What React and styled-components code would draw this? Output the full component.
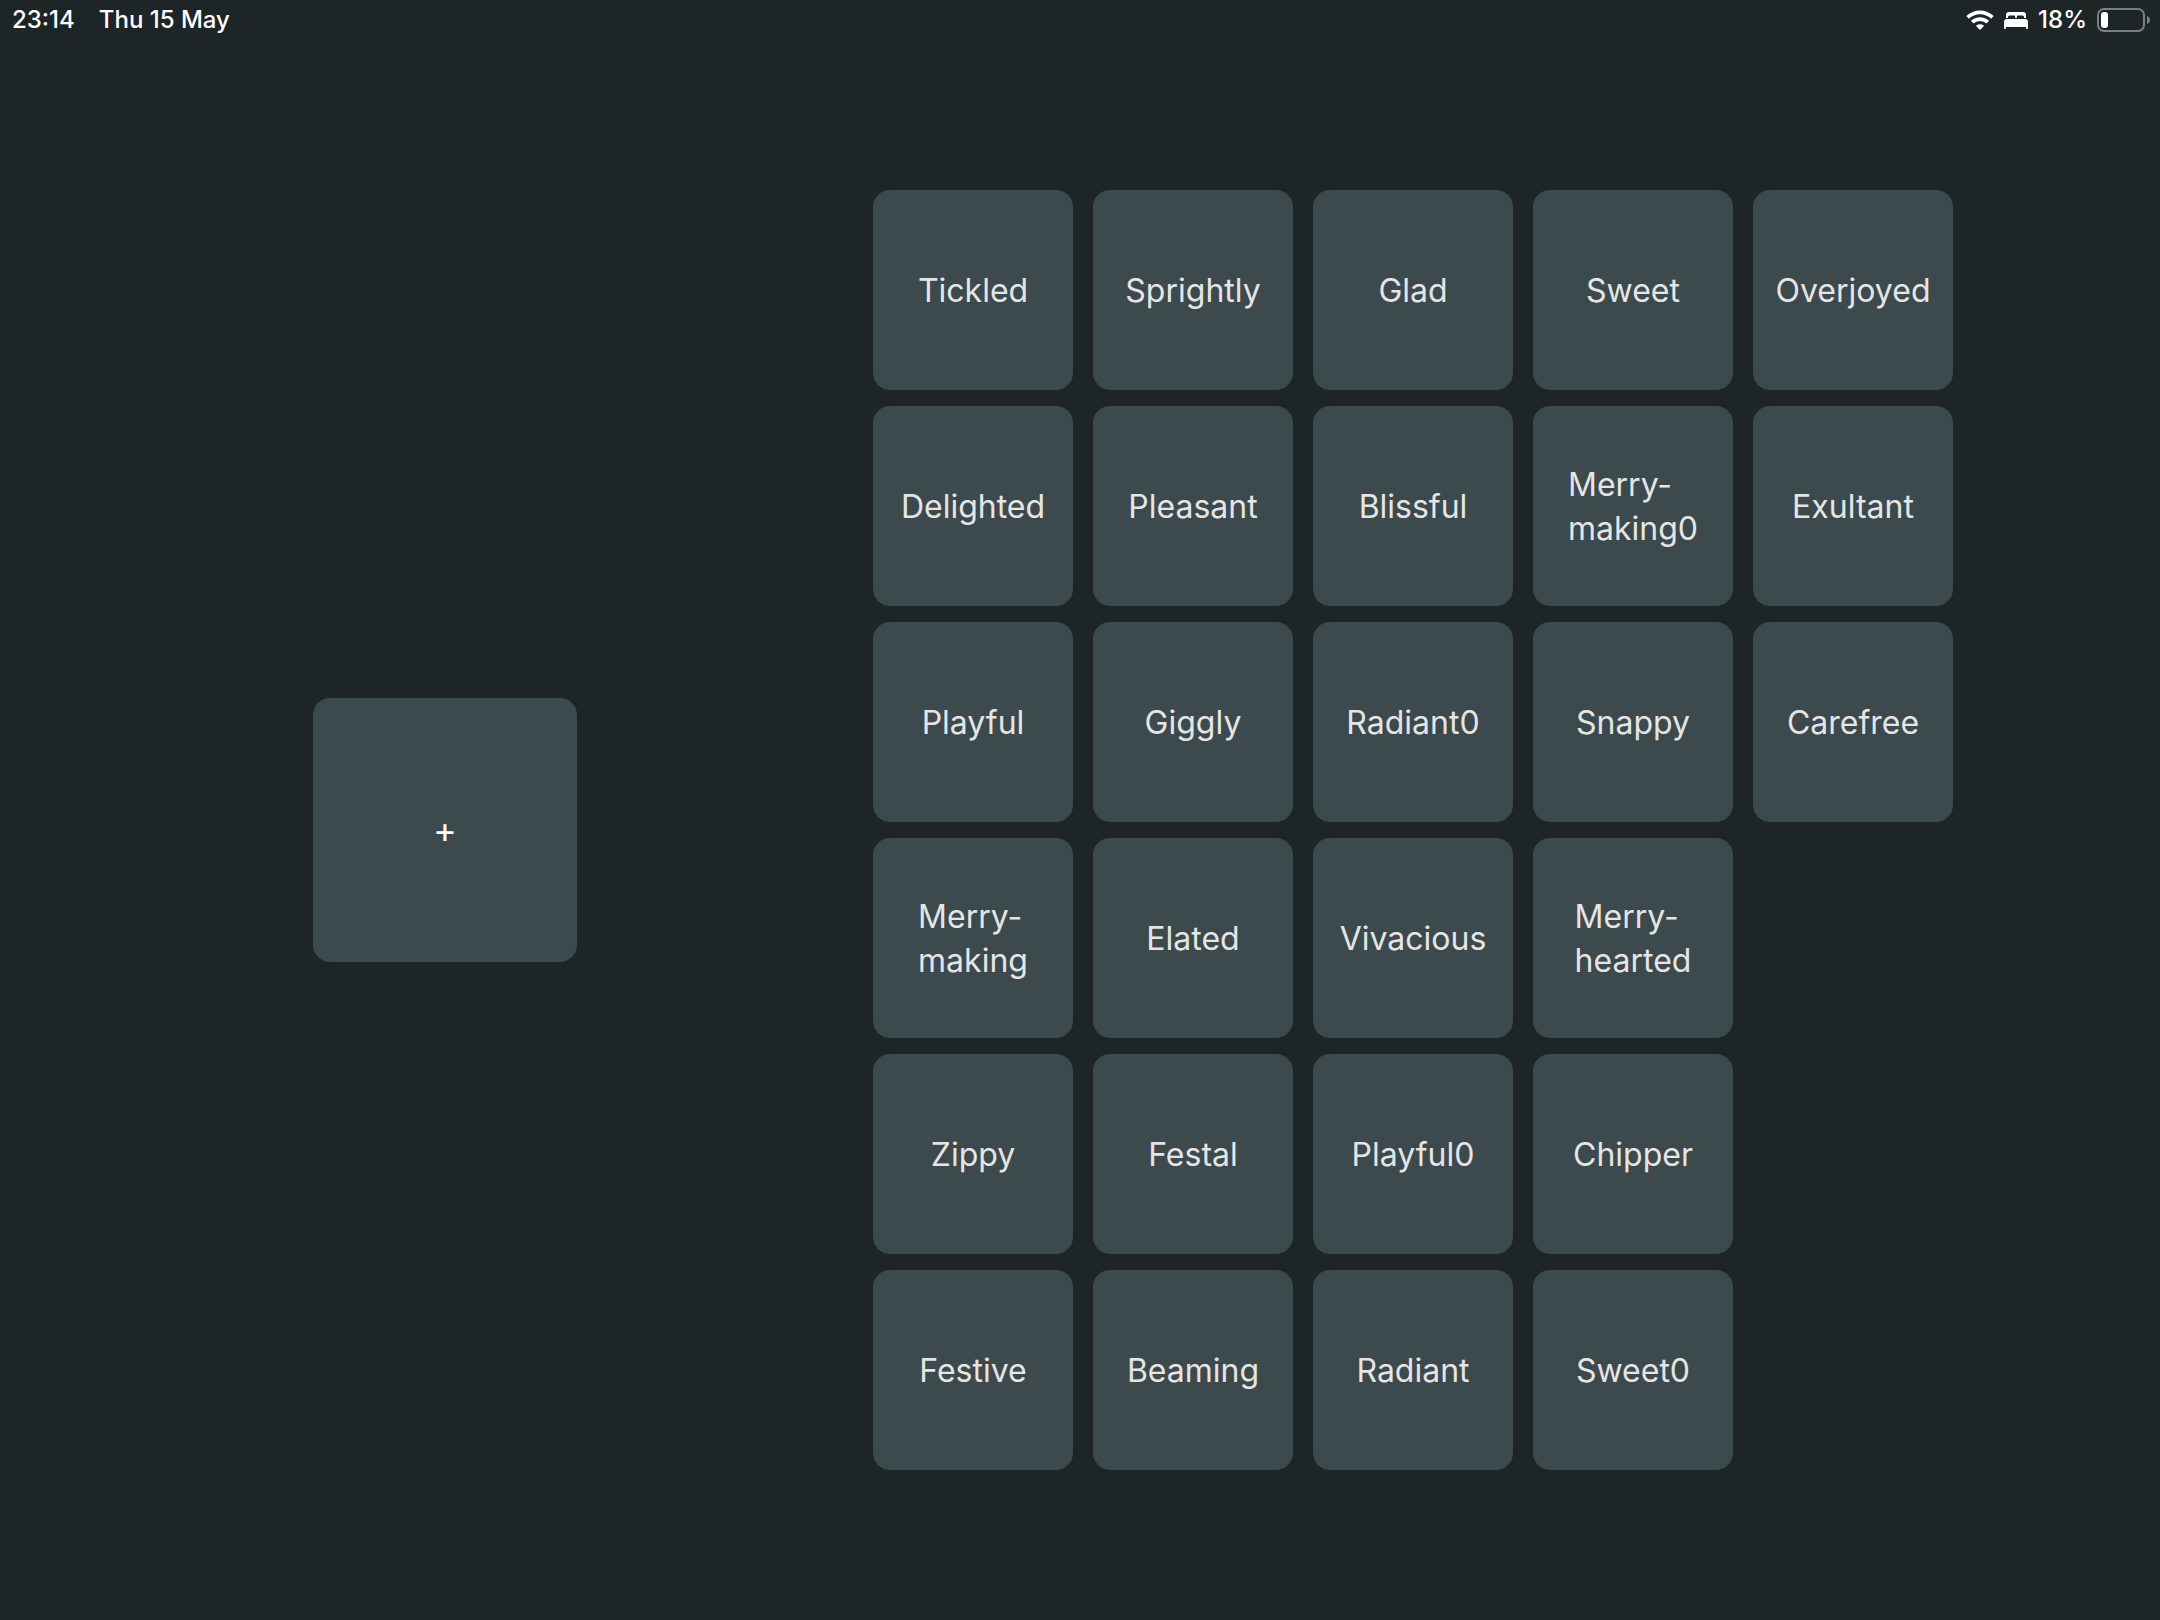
import React from "react";
import styled, { createGlobalStyle } from "styled-components";

const GlobalStyle = createGlobalStyle`
  *, *::before, *::after { box-sizing: border-box; }
  body {
    margin: 0;
    background: #1e2527;
    color: #ffffff;
    font-family: Inter, "Liberation Sans", sans-serif;
  }
`;

const Screen = styled.div`
  display: flex;
  flex-direction: column;
  min-height: 100vh;
`;

const StatusBar = styled.header`
  display: flex;
  justify-content: space-between;
  align-items: center;
  height: 40px;
  padding: 0 10px 0 12px;
  font-size: 24px;
  font-weight: 500;
  line-height: 40px;
`;

const StatusGroup = styled.div`
  display: flex;
  align-items: center;
  gap: ${({ $gap }) => $gap}px;
`;

const Icon = styled.svg`
  display: block;
  flex: none;
`;

const Main = styled.main`
  flex: 1;
  display: flex;
  align-items: center;
  padding: 0 112px;
`;

const AddArea = styled.section`
  flex: 1;
  display: flex;
  justify-content: center;
`;

const WordArea = styled.section`
  padding: 0 95px;
`;

const WordGrid = styled.div`
  display: grid;
  grid-auto-flow: column;
  grid-template-rows: repeat(6, auto);
  gap: 16px 20px;
`;

const Tile = styled.button`
  display: flex;
  align-items: center;
  justify-content: center;
  width: ${({ $size }) => $size}px;
  height: ${({ $size }) => $size}px;
  padding: ${({ $bright }) => ($bright ? "0" : "2px 0 0")};
  border: 0;
  border-radius: 17px;
  background: #3c494d;
  color: ${({ $bright }) => ($bright ? "#ffffff" : "#e5e5e5")};
  font-family: inherit;
  font-size: ${({ $bright }) => ($bright ? 36 : 32)}px;
  line-height: 44px;
  text-align: left;
  white-space: pre-line;
  cursor: pointer;
`;

const words = [
  "Tickled", "Delighted", "Playful", "Merry-\nmaking", "Zippy", "Festive",
  "Sprightly", "Pleasant", "Giggly", "Elated", "Festal", "Beaming",
  "Glad", "Blissful", "Radiant0", "Vivacious", "Playful0", "Radiant",
  "Sweet", "Merry-\nmaking0", "Snappy", "Merry-\nhearted", "Chipper", "Sweet0",
  "Overjoyed", "Exultant", "Carefree",
];

function WifiIcon() {
  return (
    <Icon width="28" height="20" viewBox="0 0 28 20" aria-label="Wi-Fi" role="img">
      <g fill="none" stroke="#fff" strokeWidth="3.8">
        <path d="M1.600 7.400C8.500 .6 19.500 .6 26.400 7.400" />
        <path d="M6.200 12.100C10.500 8 17.500 8 21.800 12.100" />
      </g>
      <path fill="#fff" d="M14 20l-4.200-4.200c2.300-2.200 6.100-2.200 8.400 0z" />
    </Icon>
  );
}

function BedIcon() {
  return (
    <Icon width="24" height="17" viewBox="0 0 24 17" aria-label="Sleep focus" role="img">
      <path
        fill="#fff"
        d="M2 6V3a3 3 0 0 1 3-3h14a3 3 0 0 1 3 3v3h-2V5a1.500 1.500 0 0 0-1.500-1.500h-4.500A1.200 1.200 0 0 0 12.800 4.700V6h-1.600V4.700A1.200 1.200 0 0 0 10 3.500H5.500A1.500 1.500 0 0 0 4 5v1z"
      />
      <path
        fill="#fff"
        d="M3 7h18a3 3 0 0 1 3 3v6a1 1 0 0 1-2 0v-1H2v1a1 1 0 0 1-2 0v-6a3 3 0 0 1 3-3z"
      />
    </Icon>
  );
}

function BatteryIcon() {
  return (
    <Icon width="53" height="24" viewBox="0 0 53 24" aria-label="Battery" role="img">
      <rect x="1" y="1" width="46" height="22" rx="6" fill="none" stroke="#7b7f80" strokeWidth="2" />
      <rect x="4" y="4" width="7" height="16" rx="3" fill="#fff" />
      <path fill="#7b7f80" d="M50 8c4 1.600 4 6.400 0 8z" />
    </Icon>
  );
}

export default function App() {
  return (
    <Screen>
      <GlobalStyle />
      <StatusBar>
        <StatusGroup $gap={24}>
          <span>23:14</span>
          <span>Thu 15 May</span>
        </StatusGroup>
        <StatusGroup $gap={10}>
          <WifiIcon />
          <BedIcon />
          <span>18%</span>
          <BatteryIcon />
        </StatusGroup>
      </StatusBar>
      <Main>
        <AddArea>
          <Tile type="button" $size={264} $bright>+</Tile>
        </AddArea>
        <WordArea>
          <WordGrid>
            {words.map((word) => (
              <Tile key={word} type="button" $size={200}>{word}</Tile>
            ))}
          </WordGrid>
        </WordArea>
      </Main>
    </Screen>
  );
}
